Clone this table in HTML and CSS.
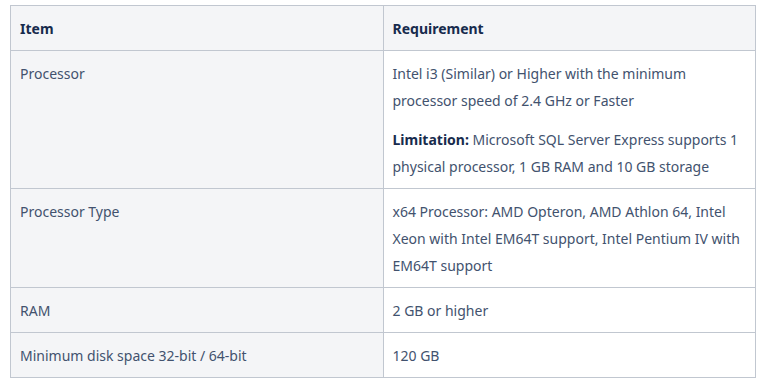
FILE: index.html
```html
<!DOCTYPE html>
<html lang="en">
<head>
  <meta charset="UTF-8" />
  <title>System Requirements</title>
  <link rel="stylesheet" href="styles.css">
</head>
<body>
  <div class="wrap">
    <table class="req-table">
      <thead>
        <tr>
          <th>Item</th>
          <th>Requirement</th>
        </tr>
      </thead>
      <tbody>
        <tr>
          <td class="item">Processor</td>
          <td>
            <p>Intel i3 (Similar) or Higher with the minimum processor speed of 2.4 GHz or Faster</p>
            <p><strong>Limitation:</strong> Microsoft SQL Server Express supports 1 physical processor, 1 GB RAM and 10 GB storage</p>
          </td>
        </tr>
        <tr>
          <td class="item">Processor Type</td>
          <td><p>x64 Processor: AMD Opteron, AMD Athlon 64, Intel Xeon with Intel EM64T support, Intel Pentium IV with EM64T support</p></td>
        </tr>
        <tr>
          <td class="item">RAM</td>
          <td><p>2 GB or higher</p></td>
        </tr>
        <tr>
          <td class="item">Minimum disk space 32-bit / 64-bit</td>
          <td><p>120 GB</p></td>
        </tr>
      </tbody>
    </table>
  </div>
</body>
</html>
```

FILE: styles.css
```css
body {
  margin: 0;
  background: #fff;
  font-family: "Noto Sans", "Open Sans", sans-serif;
  font-size: 14px;
  line-height: 27px;
  color: #42526e;
}
.wrap {
  padding: 5px 12px 0 10px;
}
.req-table {
  width: 746px;
  border-collapse: collapse;
  table-layout: fixed;
}
.req-table th,
.req-table td {
  border: 1px solid #c1c7d0;
  padding: 9px 9px 8px;
  text-align: left;
  vertical-align: top;
}
.req-table th {
  background: #f4f5f7;
  color: #172b4d;
  font-weight: 700;
}
.req-table td.item {
  background: #f4f5f7;
}
.req-table p {
  margin: 0;
}
.req-table p + p {
  margin-top: 12px;
}
.req-table strong {
  color: #172b4d;
}
```
